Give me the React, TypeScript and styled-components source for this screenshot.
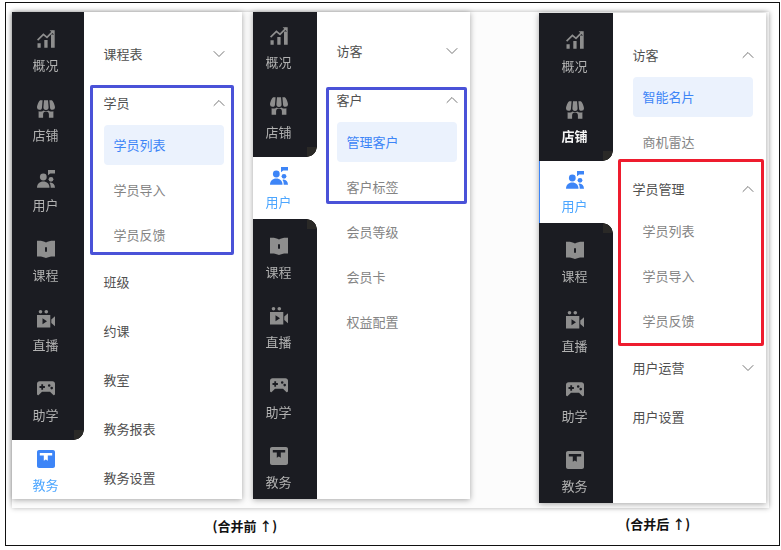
import styled, { createGlobalStyle } from "styled-components"
import { ChevronDown, ChevronUp } from "lucide-react"
import { ReactNode } from "react"

const GlobalStyle = createGlobalStyle`
    body {
        margin: 0;
        background: #fff;
        font-family: "Noto Sans CJK SC", "Noto Sans", sans-serif;
    }
`

const icons: Record<string, ReactNode> = {
    chart: (
        <>
            <path d="M.5 13.3h3.2v4.4H.5zM7.3 10h3.3v7.7H7.3zM14 4.5h3.7v13.2H14z" />
            <path d="M.6 10.2 6.4 4.3l3.6 3 6.4-6.4" fill="none" stroke="currentColor" strokeWidth="1.7" />
            <path d="M12.6.3h5.1v5z" />
        </>
    ),
    shop: (
        <>
            <path d="M3.2.3h2.4L5 7.2a2.5 2.5 0 0 1-5 .2C0 6 1.6 1.2 3.2.3zM7 .3h4l.6 7a2.6 2.6 0 0 1-5.2 0zM12.4.3h2.4C16.400 1.2 18 6 18 7.4a2.5 2.5 0 0 1-5-.2z" />
            <path d="M1.6 11.2c2.6.6 4 0 5-.8 1.2.8 3.500.8 4.800 0 1 .8 2.400 1.400 5 .8v6.600h-4.500v-3.500a2.900 2.900 0 0 0-5.800 0v3.500H1.600z" />
        </>
    ),
    user: (
        <>
            <circle cx="6.3" cy="7" r="3.4" />
            <path d="M0 17.7c0-3.7 2.6-6.2 6.3-6.200s6.200 2.500 6.200 6.200z" />
            <circle cx="14" cy="9.3" r="2.4" />
            <path d="M13.2 12.5c2.800-.2 4.600 2 4.800 5.200h-4.300c0-2-.2-3.700-1.300-4.700z" />
            <path d="M11 0h7v3.4h-4.800L11 5.200z" />
        </>
    ),
    book: (
        <path
            fillRule="evenodd"
            d="M0 .8C3.500.5 6.700 1 9 2.500 11.300 1 14.500.5 18 .8v15.700c-3.500-.3-6.700.2-9 1.500-2.300-1.300-5.500-1.800-9-1.500zM8 7.200v4.600h2V7.200z"
        />
    ),
    video: (
        <>
            <circle cx="3.5" cy="1.8" r="1.8" />
            <circle cx="9.3" cy="1.8" r="1.8" />
            <path fillRule="evenodd" d="M0 5h13.300v12.500H0zM5.500 8.300v6l4.500-3z" />
            <path d="M14.300 9.500 18 6.200v10.100l-3.700-3.200z" />
        </>
    ),
    game: (
        <path
            fillRule="evenodd"
            d="M2.500 1.200h13c1.400 0 2.500 1.100 2.500 2.500v10.400c0 1-1 1.400-1.700.9L13 11.700H5l-3.300 3.300c-.7.500-1.700.1-1.700-.9V3.700c0-1.400 1.100-2.500 2.500-2.500zM4.300 4.300v1.800H2.500v1.800h1.800v1.800h1.800V7.900h1.800V6.100H6.100V4.300zM12.200 4.200a1.300 1.300 0 1 0 0 2.600 1.300 1.300 0 0 0 0-2.600zM14.700 6.800a1.300 1.300 0 1 0 0 2.600 1.300 1.300 0 0 0 0-2.600z"
        />
    ),
    teach: (
        <path
            fillRule="evenodd"
            d="M2 0h14c1.100 0 2 .9 2 2v14c0 1.100-.9 2-2 2H2c-1.100 0-2-.9-2-2V2C0 .9.900 0 2 0zM2.800 3v2.400h4v5.400l2-1.400 2 1.400V5.400h4.400V3z"
        />
    ),
}

const navItems = [
    { icon: "chart", label: "概况" },
    { icon: "shop", label: "店铺" },
    { icon: "user", label: "用户" },
    { icon: "book", label: "课程" },
    { icon: "video", label: "直播" },
    { icon: "game", label: "助学" },
    { icon: "teach", label: "教务" },
]

function Sidebar(props: { width: number; top: number; trim: number; active: string; bright?: string; stripe?: boolean }) {
    return (
        <Rail $width={props.width} $top={props.top}>
            {navItems.map((item) => (
                <NavItem key={item.label} $active={item.label === props.active} $stripe={props.stripe} $trim={props.trim}>
                    <svg width="18" height="18" viewBox="0 0 18 18" fill="currentColor">
                        {icons[item.icon]}
                    </svg>
                    <NavLabel $bright={item.label === props.bright}>{item.label}</NavLabel>
                </NavItem>
            ))}
        </Rail>
    )
}

function Title(props: { text: string; open?: boolean; closed?: boolean }) {
    return (
        <MenuTitle $open={props.open}>
            <span>{props.text}</span>
            {props.open && <ChevronUp size={20} strokeWidth={1.2} />}
            {props.closed && <ChevronDown size={20} strokeWidth={1.2} />}
        </MenuTitle>
    )
}

export default function App() {
    return (
        <Frame>
            <GlobalStyle />
            <Shot>
                <Panel $height={487}>
                    <Sidebar width={72} top={8} trim={4} active="教务" />
                    <Menu $right={18} $top={20}>
                        <Title text="课程表" closed />
                        <Group>
                            <Highlight $color="#4a52d8" $inset="4px -10px 0 -14px" />
                            <Title text="学员" open />
                            <SubItem $active>学员列表</SubItem>
                            <SubItem>学员导入</SubItem>
                            <SubItem>学员反馈</SubItem>
                        </Group>
                        <Title text="班级" />
                        <Title text="约课" />
                        <Title text="教室" />
                        <Title text="教务报表" />
                        <Title text="教务设置" />
                    </Menu>
                </Panel>

                <Panel $height={487} $left={11}>
                    <Sidebar width={64} top={5} trim={12} active="用户" />
                    <Menu $right={13} $top={17}>
                        <Title text="访客" closed />
                        <Group>
                            <Highlight $color="#4a52d8" $inset="9px -10px 3px -11px" />
                            <Title text="客户" open />
                            <SubItem $active>管理客户</SubItem>
                            <SubItem>客户标签</SubItem>
                        </Group>
                        <SubItem>会员等级</SubItem>
                        <SubItem>会员卡</SubItem>
                        <SubItem>权益配置</SubItem>
                    </Menu>
                </Panel>

                <Panel $height={490} $left={69} $drop={1}>
                    <Sidebar width={74} top={8} trim={2} active="用户" bright="店铺" stripe />
                    <Menu $right={13} $top={20}>
                        <Title text="访客" open />
                        <SubItem $active>智能名片</SubItem>
                        <SubItem>商机雷达</SubItem>
                        <Group>
                            <Highlight $color="#ee1c2e" $inset="-8px -11px -5px -15px" />
                            <Title text="学员管理" open />
                            <SubItem>学员列表</SubItem>
                            <SubItem>学员导入</SubItem>
                            <SubItem>学员反馈</SubItem>
                        </Group>
                        <Title text="用户运营" closed />
                        <Title text="用户设置" />
                    </Menu>
                </Panel>
            </Shot>
            <Captions>
                <Caption $left={201} $top={9}>(合并前 ↑)</Caption>
                <Caption $left={348} $top={7}>(合并后 ↑)</Caption>
            </Captions>
        </Frame>
    )
}

const Frame = styled.div`
    box-sizing: border-box;
    width: 775px;
    height: 544px;
    margin: 2px 0 0 5px;
    padding: 8.5px 0 0 5.5px;
    border: 1.5px solid #111;
`

const Shot = styled.div`
    display: flex;
    align-items: flex-start;
    width: 757px;
    height: 496px;
    background: #fcfcfc;
    box-shadow: 0 0 5px rgba(0, 0, 0, 0.3);
`

const Panel = styled.div<{ $height: number; $left?: number; $drop?: number }>`
    display: flex;
    height: ${(p) => p.$height}px;
    margin-left: ${(p) => p.$left || 0}px;
    margin-top: ${(p) => p.$drop || 0}px;
    background: #fff;
    box-shadow: 0 1px 6px rgba(0, 0, 0, 0.35);
`

const Rail = styled.div<{ $width: number; $top: number }>`
    display: flex;
    flex-direction: column;
    gap: 8px;
    box-sizing: border-box;
    flex: none;
    width: ${(p) => p.$width}px;
    height: 100%;
    padding-top: ${(p) => p.$top}px;
    background: #1b1c22;
    overflow: hidden;
`

const NavItem = styled.div<{ $active?: boolean; $stripe?: boolean; $trim: number }>`
    position: relative;
    display: flex;
    flex-direction: column;
    align-items: center;
    flex: none;
    box-sizing: border-box;
    height: 62px;
    padding: 10px ${(p) => p.$trim}px 0 0;
    color: ${(p) => (p.$active ? "#3d85f7" : "#8e8e8e")};
    background: ${(p) => (p.$active ? "#fff" : "transparent")};
    box-shadow: ${(p) => (p.$active && p.$stripe ? "inset 1px 0 0 #3d85f7" : "none")};

    &::before,
    &::after {
        content: "";
        display: ${(p) => (p.$active ? "block" : "none")};
        position: absolute;
        right: 0;
        width: 10px;
        height: 10px;
    }

    &::before {
        top: -10px;
        background: radial-gradient(circle at 0 0, #2a2927 9.5px, #fff 10px);
    }

    &::after {
        bottom: -10px;
        background: radial-gradient(circle at 0 100%, #2a2927 9.5px, #fff 10px);
    }
`

const NavLabel = styled.span<{ $bright?: boolean }>`
    margin-top: 7px;
    font-size: 13px;
    line-height: 20px;
    font-weight: ${(p) => (p.$bright ? 700 : 400)};
    color: ${(p) => (p.$bright ? "#f4f4f4" : "inherit")};
    filter: brightness(${(p) => (p.$bright ? 1 : 1.25)});
`

const Menu = styled.div<{ $right: number; $top: number }>`
    flex: none;
    width: 120px;
    padding: ${(p) => p.$top}px ${(p) => p.$right}px 0 20px;
`

const Group = styled.div`
    position: relative;
`

const Highlight = styled.div<{ $color: string; $inset: string }>`
    position: absolute;
    inset: ${(p) => p.$inset};
    border: 3px solid ${(p) => p.$color};
    border-radius: 2px;
    pointer-events: none;
`

const MenuTitle = styled.div<{ $open?: boolean }>`
    display: flex;
    align-items: center;
    justify-content: space-between;
    height: 44px;
    margin-bottom: ${(p) => (p.$open ? 0 : 5)}px;
    font-size: 13px;
    white-space: nowrap;
    color: #505050;

    & svg {
        margin-right: -5px;
        color: #777;
    }
`

const SubItem = styled.div<{ $active?: boolean }>`
    box-sizing: border-box;
    height: 40px;
    margin-bottom: 5px;
    padding-left: 10px;
    border-radius: 4px;
    font-size: 13px;
    line-height: 40px;
    color: ${(p) => (p.$active ? "#3d85f7" : "#848484")};
    background: ${(p) => (p.$active ? "#ebf2fd" : "transparent")};
`

const Captions = styled.div`
    display: flex;
    align-items: flex-start;
`

const Caption = styled.div<{ $left: number; $top: number }>`
    margin: ${(p) => p.$top}px 0 0 ${(p) => p.$left}px;
    font-size: 13px;
    line-height: 18px;
    font-weight: 700;
    color: #111;
`
